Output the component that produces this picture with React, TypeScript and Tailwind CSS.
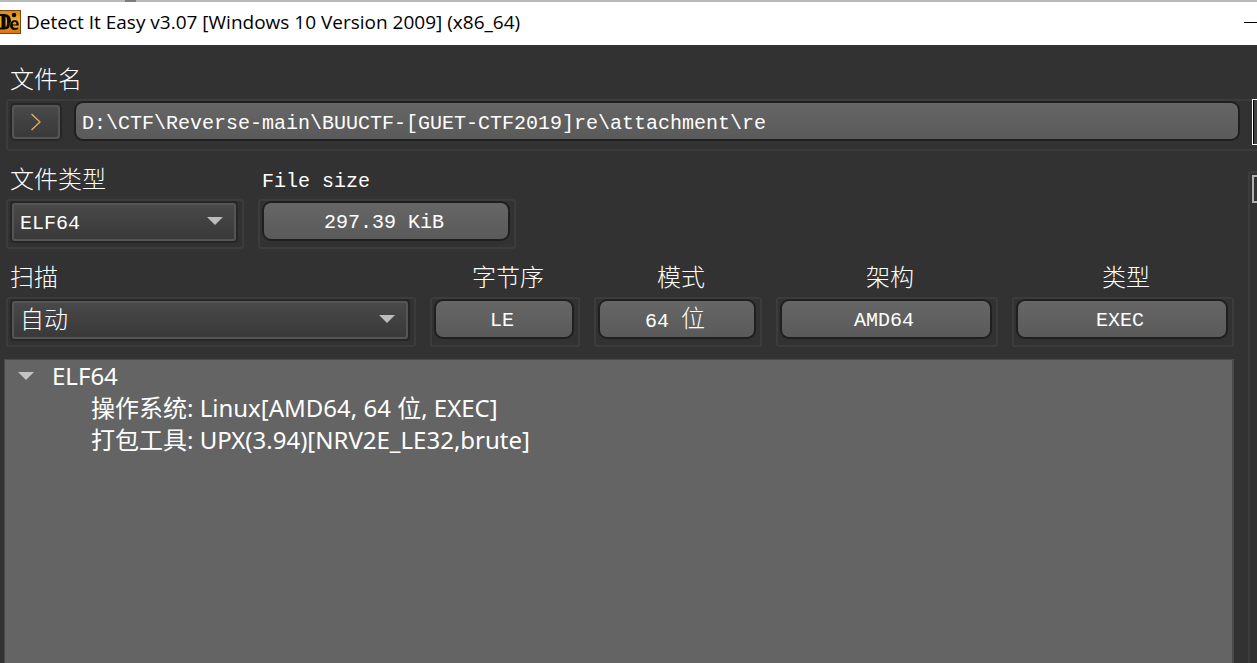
import type { ReactNode } from 'react';

const cjk = "font-['Liberation_Mono','Noto_Sans_CJK_SC',monospace] font-light";
const field =
  'flex h-10 w-full items-center justify-center rounded-[9px] border-2 border-[#1f1f1f] bg-linear-to-b from-[#666666] to-[#5a5a5a] pr-1 pt-1 text-xl';

function Frame({ children }: { children: ReactNode }) {
  return <div className="h-[50px] rounded-[3px] border-2 border-[#3c3c3c] pl-0.5 pr-1">{children}</div>;
}

function Drop({ id, options, size }: { id: string; options: string[]; size: string }) {
  return (
    <div className="relative rounded-[4px] border-2 border-[#262626]">
      <select
        id={id}
        className={`block h-[38px] w-full appearance-none rounded-[3px] border-2 border-[#555555] bg-linear-to-b from-[#494949] to-[#393939] pr-10 pt-[3px] outline-none ${size}`}
      >
        {options.map((o) => (
          <option key={o}>{o}</option>
        ))}
      </select>
      <svg className="pointer-events-none absolute right-[13px] top-[14px]" width="16" height="8" viewBox="0 0 16 8" aria-hidden="true">
        <path d="M0 0H16L8 8Z" fill="#bcbcbc" />
      </svg>
    </div>
  );
}

function Value({ id, label, children }: { id: string; label: string; children: ReactNode }) {
  return (
    <div>
      <label htmlFor={id} className="block h-10 pl-1.5 pt-1.5 text-center text-2xl leading-[34px]">
        {label}
      </label>
      <Frame>
        <output id={id} className={field}>
          {children}
        </output>
      </Frame>
    </div>
  );
}

function Logo() {
  return (
    <svg width="21" height="24" viewBox="0 0 21 24" aria-hidden="true">
      <defs>
        <linearGradient id="amber" x1="0" y1="0" x2="0" y2="1">
          <stop offset="0" stopColor="#d98a1c" />
          <stop offset="0.5" stopColor="#f5b12e" />
          <stop offset="1" stopColor="#d9701a" />
        </linearGradient>
      </defs>
      <rect width="21" height="24" fill="#7a4a12" />
      <rect y="1" width="20" height="22" fill="url(#amber)" />
      <path d="M0 4H4C9 4 11 7 11 11.500C11 16 9 19.500 4 19.500H0V17.500H1.500V6H0ZM5.500 6.500V17C7 16.500 7 14.500 7 11.700C7 9 7 7 5.500 6.500Z" fill="#0b0a08" fillRule="evenodd" />
      <path d="M19 15.800H13C13.200 18 15.500 18.500 18.500 17V19.300C14 21.300 9.800 20 9.800 15.500C9.800 12 12 10 14.700 10C17.600 10 19.300 12 19 15.800ZM13 14.200H16.200C16.200 11.500 13.200 11.300 13 14.200Z" fill="#0b0a08" fillRule="evenodd" stroke="#f5b12e" strokeWidth="0.4" />
      <circle cx="14" cy="5" r="2.300" fill="#0b0a08" />
    </svg>
  );
}

export default function App() {
  return (
    <div className={`flex min-h-screen flex-col overflow-hidden bg-[#323232] text-white ${cjk}`}>
      <div className="h-0.5 bg-[#b9b9b9] pl-[125px]">
        <div className="h-0.5 w-[11px] bg-[#7c7c7c]" />
      </div>
      <header className="flex h-[43px] items-center justify-between bg-white pb-[3px] font-['Open_Sans',sans-serif] font-normal text-black">
        <div className="flex items-center gap-[5px]">
          <Logo />
          <h1 className="text-[19px] leading-6 whitespace-nowrap">Detect It Easy v3.07 [Windows 10 Version 2009] (x86_64)</h1>
        </div>
        <button aria-label="Minimize" className="flex h-full w-[13px] items-center">
          <span className="h-px w-full bg-black" />
        </button>
      </header>

      <section className="pl-1.5 pt-[14px]">
        <label htmlFor="path" className="block h-10 pl-1 pt-1.5 text-2xl leading-[34px]">
          文件名
        </label>
        <div className="flex h-[52px] rounded-l-[3px] border-2 border-r-0 border-[#3c3c3c] pl-0.5">
          <button
            aria-label="Open file"
            className="mr-3 mt-0.5 flex h-[38px] w-[52px] items-center justify-center rounded-[5px] border-2 border-[#262626] bg-[#555555] p-0.5"
          >
            <span className="flex h-full w-full items-center justify-center rounded-[2px] bg-linear-to-b from-[#494949] to-[#393939]">
              <svg width="12" height="18" viewBox="0 0 12 18" fill="none" aria-hidden="true">
                <path d="M1.500 1L10 9L1.500 17" stroke="#e0b070" strokeWidth="1.300" />
              </svg>
            </span>
          </button>
          <input
            id="path"
            readOnly
            value="D:\CTF\Reverse-main\BUUCTF-[GUET-CTF2019]re\attachment\re"
            className="h-10 min-w-0 flex-1 rounded-[9px] border-2 border-[#1f1f1f] bg-linear-to-b from-[#666666] to-[#5a5a5a] px-1.5 pt-1 text-xl outline-none"
          />
          <button aria-label="Browse" className="-mt-0.5 ml-3 h-[46px] w-[5px] border border-r-0 border-white bg-black pl-px">
            <span className="block h-full bg-[#424242]" />
          </button>
        </div>
      </section>

      <div className="flex flex-1">
        <main className="flex min-w-0 flex-1 flex-col">
          <section className="flex gap-[14px] pl-1.5 pt-2">
            <div className="w-[238px]">
              <label htmlFor="kind" className="block h-10 pl-1 pt-1.5 text-2xl leading-[34px]">
                文件类型
              </label>
              <Frame>
                <Drop id="kind" options={['ELF64']} size="pl-1.5 text-xl" />
              </Frame>
            </div>
            <div className="w-[258px]">
              <label htmlFor="size" className="block h-10 pl-1 pt-1.5 text-xl leading-[34px]">
                File size
              </label>
              <Frame>
                <output id="size" className={field}>
                  297.39 KiB
                </output>
              </Frame>
            </div>
          </section>

          <section className="grid grid-cols-[410fr_150fr_168fr_222fr_222fr] gap-[14px] pl-1.5 pt-2">
            <div>
              <label htmlFor="scan" className="block h-10 pl-1 pt-1.5 text-2xl leading-[34px]">
                扫描
              </label>
              <Frame>
                <Drop id="scan" options={['自动']} size="pl-1.5 text-2xl" />
              </Frame>
            </div>
            <Value id="endian" label="字节序">LE</Value>
            <Value id="mode" label="模式">
              <span className="whitespace-pre">64 <span className="text-2xl">位</span></span>
            </Value>
            <Value id="arch" label="架构">AMD64</Value>
            <Value id="type" label="类型">EXEC</Value>
          </section>

          <ul className="ml-1 mt-3 flex-1 border-l border-r-2 border-t border-[#4a4a4a] bg-[#646464] font-['Noto_Sans','Noto_Sans_CJK_SC',sans-serif] text-2xl leading-8 font-normal">
            <li>
              <div className="flex items-center gap-[18px] pl-[13px]">
                <svg width="16" height="8" viewBox="0 0 16 8" aria-hidden="true">
                  <path d="M0 0H16L8 8Z" fill="#c4c4c4" />
                </svg>
                ELF64
              </div>
              <ul className="pl-[86px]">
                <li className="h-8">操作系统: Linux[AMD64, 64 位, EXEC]</li>
                <li className="h-8">打包工具: UPX(3.94)[NRV2E_LE32,brute]</li>
              </ul>
            </li>
          </ul>
        </main>

        <aside className="ml-[14px] mt-5 w-[9px] rounded-tl-[3px] border-l-2 border-t-2 border-[#3c3c3c] pl-0.5 pt-0.5">
          <button aria-label="Advanced" className="block h-7 w-full border-2 border-r-0 border-[#b0b0b0]" />
        </aside>
      </div>
    </div>
  );
}
